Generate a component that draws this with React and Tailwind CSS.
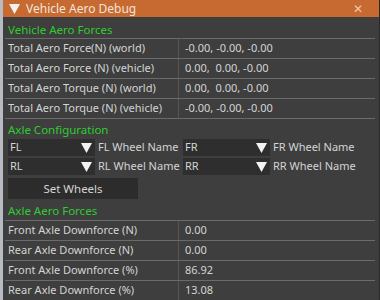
import React from 'react';

const forces = [
  ['Total Aero Force(N) (world)', '-0.00, -0.00, -0.00'],
  ['Total Aero Force (N) (vehicle)', '0.00,  0.00, -0.00'],
  ['Total Aero Torque (N) (world)', '0.00,  0.00, -0.00'],
  ['Total Aero Torque (N) (vehicle)', '-0.00, -0.00, -0.00'],
];

const axle = [
  ['Front Axle Downforce (N)', '0.00'],
  ['Rear Axle Downforce (N)', '0.00'],
  ['Front Axle Downforce (%)', '86.92'],
  ['Rear Axle Downforce (%)', '13.08'],
];

const Arrow = () => (
  <svg width="11" height="10" viewBox="0 0 11 10" className="shrink-0">
    <polygon points="0,0 11,0 5.5,10" fill="#f2f2f2" />
  </svg>
);

const Table = ({ rows }) => (
  <div className="ml-[-3px] mr-[4px] border-t border-[#6a6a6a]">
    {rows.map(([k, v]) => (
      <div key={k} className="flex h-[20px] items-center border-b border-[#6a6a6a]">
        <div className="w-[174px] pl-[3px] h-full flex items-center border-r border-[#555]">{k}</div>
        <div className="pl-[6px] whitespace-pre">{v}</div>
      </div>
    ))}
  </div>
);

const Combo = ({ value, label }) => (
  <div className="flex items-center">
    <div className="w-[87px] h-[17px] bg-[#2e2e2e] flex items-center justify-between pl-[2px] pr-[3px]">
      <span>{value}</span>
      <Arrow />
    </div>
    <span className="ml-[3px] w-[82px] whitespace-nowrap">{label}</span>
  </div>
);

export default function App() {
  return (
    <div className="w-[380px] h-[300px] bg-[#b8bcc2] overflow-hidden flex" style={{ fontFamily: '"Noto Sans", "Open Sans", sans-serif' }}>
      <div className="ml-[3px] flex-1 flex flex-col bg-[#3e3e3e] text-[11px] text-[#d4d4d4] border-r border-[#2a2a2a]">
        <div className="h-[17px] bg-[#c76a31] flex items-center pl-[6px] pr-[16px] text-[#f1e4da] text-[12px]">
          <Arrow />
          <span className="ml-[6px]">Vehicle Aero Debug</span>
          <span className="ml-auto text-[12px] leading-none text-[#f0c8ae]">✕</span>
        </div>
        <div className="pl-[5px] flex flex-col">
          <div className="h-[21px] pt-[5px] leading-[16px] text-[#2fcc2f] text-[11.5px]">Vehicle Aero Forces</div>
          <Table rows={forces} />
          <div className="h-[20px] pt-[3px] leading-[16px] text-[#2fcc2f] text-[11.5px]">Axle Configuration</div>
          <div className="flex flex-col gap-[2px]">
            <div className="flex gap-[3px]">
              <Combo value="FL" label="FL Wheel Name" />
              <Combo value="FR" label="FR Wheel Name" />
            </div>
            <div className="flex gap-[3px]">
              <Combo value="RL" label="RL Wheel Name" />
              <Combo value="RR" label="RR Wheel Name" />
            </div>
          </div>
          <div className="mt-[3px] w-[130px] h-[21px] bg-[#2c2c2c] flex items-center justify-center text-[11.5px]">Set Wheels</div>
          <div className="h-[21px] pt-[4px] leading-[16px] text-[#2fcc2f] text-[11.5px]">Axle Aero Forces</div>
          <Table rows={axle} />
        </div>
      </div>
    </div>
  );
}
